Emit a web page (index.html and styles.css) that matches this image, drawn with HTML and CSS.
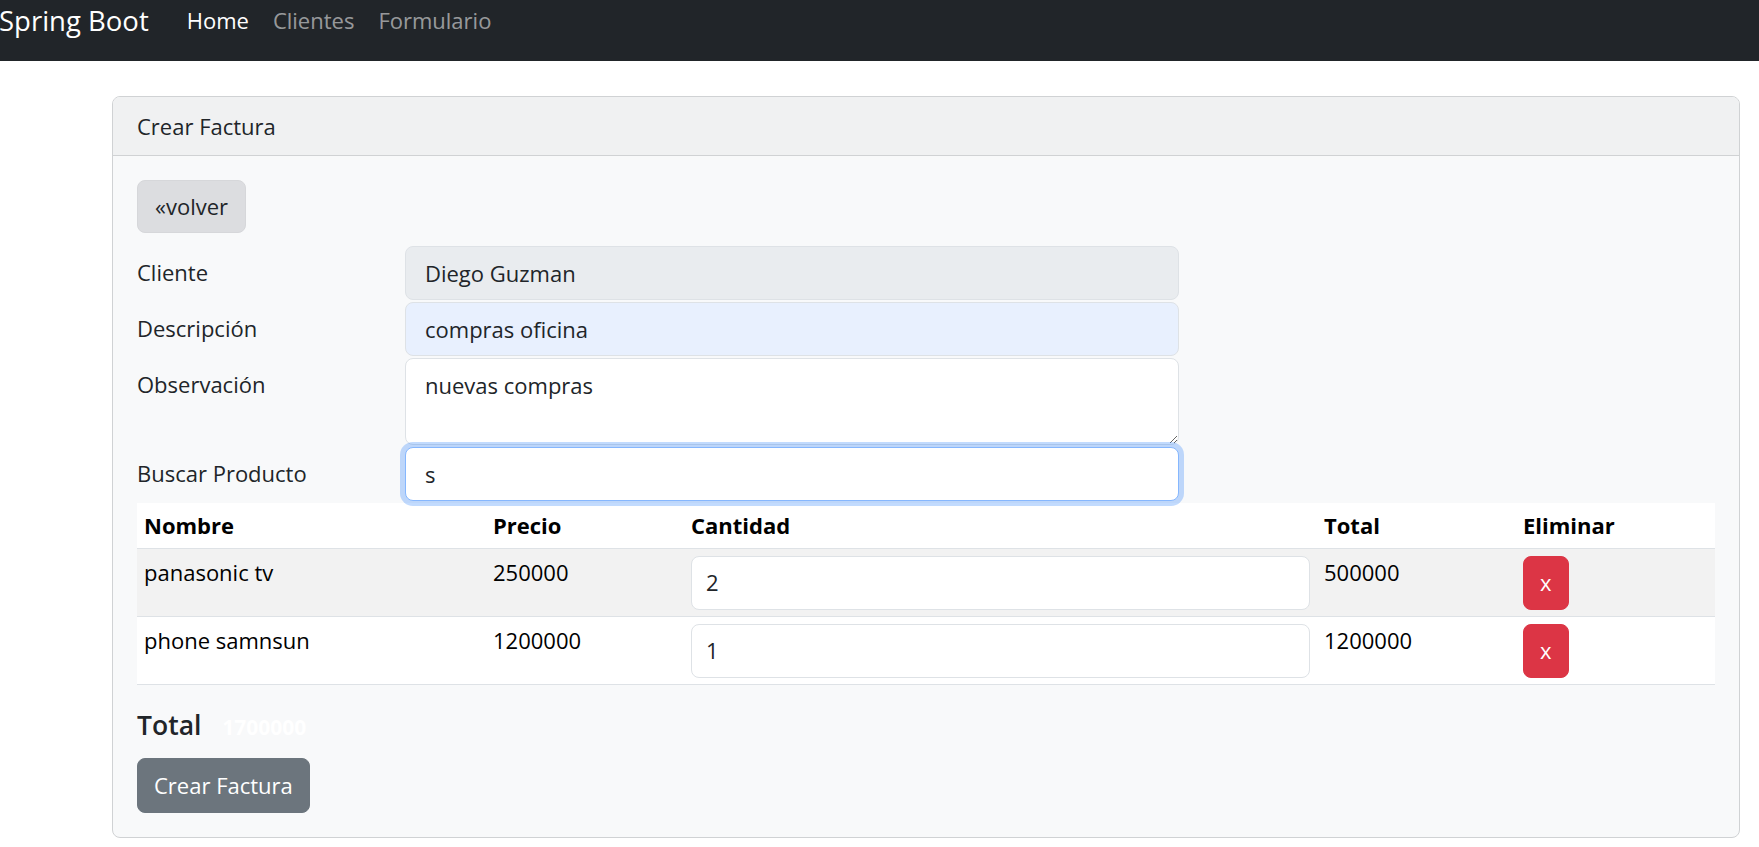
FILE: index.html
```html
<!DOCTYPE html>
<html lang="es">
<head>
<meta charset="utf-8">
<title>Crear Factura</title>
<link rel="stylesheet" href="styles.css">
</head>
<body>
<nav class="navbar">
  <a class="brand" href="#">Spring Boot</a>
  <ul class="nav">
    <li><a class="nav-link active" href="#">Home</a></li>
    <li><a class="nav-link" href="#">Clientes</a></li>
    <li><a class="nav-link" href="#">Formulario</a></li>
  </ul>
</nav>
<main class="page">
  <section class="card">
    <div class="card-header">Crear Factura</div>
    <div class="card-body">
      <div class="back-row"><a class="btn btn-back" href="#">«volver</a></div>
      <form class="form">
        <div class="form-row">
          <label class="form-label">Cliente</label>
          <input class="form-control is-readonly" type="text" value="Diego Guzman" readonly>
        </div>
        <div class="form-row">
          <label class="form-label">Descripción</label>
          <input class="form-control is-autofill" type="text" value="compras oficina">
        </div>
        <div class="form-row">
          <label class="form-label">Observación</label>
          <textarea class="form-control textarea" rows="2">nuevas compras</textarea>
        </div>
        <div class="form-row">
          <label class="form-label">Buscar Producto</label>
          <input class="form-control is-focused" type="text" value="s">
        </div>
      </form>
      <table class="table">
        <colgroup>
          <col class="c-nombre"><col class="c-precio"><col class="c-cant"><col class="c-total"><col class="c-del">
        </colgroup>
        <thead>
          <tr><th>Nombre</th><th>Precio</th><th>Cantidad</th><th>Total</th><th>Eliminar</th></tr>
        </thead>
        <tbody>
          <tr class="striped">
            <td>panasonic tv</td><td>250000</td>
            <td><input class="form-control qty" type="number" value="2"></td>
            <td>500000</td>
            <td><button class="btn btn-danger" type="button">x</button></td>
          </tr>
          <tr>
            <td>phone samnsun</td><td>1200000</td>
            <td><input class="form-control qty" type="number" value="1"></td>
            <td>1200000</td>
            <td><button class="btn btn-danger" type="button">x</button></td>
          </tr>
        </tbody>
      </table>
      <h4 class="total">Total <span class="badge">1700000</span></h4>
      <button class="btn btn-secondary" type="button">Crear Factura</button>
    </div>
  </section>
</main>
</body>
</html>
```

FILE: styles.css
```css
* { box-sizing: border-box; }

body {
  margin: 0;
  font-family: "Open Sans", "Noto Sans", sans-serif;
  font-size: 22px;
  line-height: 33px;
  color: #212529;
  background: #ffffff;
}

.navbar {
  display: flex;
  align-items: flex-start;
  height: 61px;
  background: #212529;
}

.brand {
  font-size: 27.5px;
  line-height: 41px;
  color: #ffffff;
  text-decoration: none;
  margin-left: -1px;
  margin-right: 26px;
}

.nav {
  display: flex;
  list-style: none;
  margin: 0;
  padding: 0;
}

.nav-link {
  display: block;
  padding: 4px 12px 0;
  color: rgba(255, 255, 255, 0.55);
  text-decoration: none;
}

.nav-link.active { color: #ffffff; }

.page {
  padding: 35px 19px 11px 112px;
}

.card {
  border: 1px solid #d0d2d4;
  border-radius: 8px;
  background: #f8f9fa;
  overflow: hidden;
}

.card-header {
  padding: 13px 24px 12px;
  background: #f0f1f2;
  border-bottom: 1px solid #d0d2d4;
}

.card-body {
  padding: 24px;
}

.back-row { display: flex; }

.btn {
  display: inline-block;
  font-family: inherit;
  font-size: 22px;
  line-height: 33px;
  border: 1px solid transparent;
  border-radius: 8px;
  text-decoration: none;
  cursor: pointer;
}

.btn-back {
  padding: 9px 17px;
  background: #dcdde0;
  border-color: #d6d7da;
  color: #212529;
}

.form {
  display: flex;
  flex-direction: column;
  gap: 2px;
  margin-top: 13px;
}

.form-row {
  display: grid;
  grid-template-columns: 268px 774px;
}

.form-label {
  padding-top: 10px;
}

.form-control {
  display: block;
  width: 100%;
  font-family: inherit;
  font-size: 22px;
  line-height: 33px;
  padding: 9.5px 19px;
  color: #212529;
  background: #ffffff;
  border: 1px solid #dee2e6;
  border-radius: 8px;
  outline: none;
}

.is-readonly { background: #e9ecef; }
.is-autofill { background: #e8f0fe; }

.textarea {
  height: 87px;
  resize: vertical;
}

.is-focused {
  border-color: #86b7fe;
  box-shadow: 0 0 0 5px rgba(13, 110, 253, 0.25);
  position: relative;
  z-index: 1;
}

.table {
  width: 100%;
  margin-top: 2px;
  margin-bottom: 20px;
  border-collapse: collapse;
  table-layout: fixed;
  background: #ffffff;
  color: #000000;
}

.c-nombre { width: 349px; }
.c-precio { width: 198px; }
.c-cant { width: 633px; }
.c-total { width: 199px; }
.c-del { width: auto; }

.table th,
.table td {
  padding: 6.5px 7px;
  text-align: left;
  vertical-align: top;
  border-bottom: 1px solid #dee2e6;
}

.table th {
  font-weight: 700;
  padding-top: 6px;
  padding-bottom: 6px;
}

.table tr.striped td { background: #f2f2f2; }

.qty {
  -moz-appearance: textfield;
  appearance: textfield;
  padding: 9.5px 14px;
}
.qty::-webkit-inner-spin-button,
.qty::-webkit-outer-spin-button { -webkit-appearance: none; margin: 0; }

.btn-danger {
  padding: 9.5px 16px;
  background: #dc3545;
  border-color: #dc3545;
  color: #ffffff;
}

.total {
  margin: 0 0 13px;
  font-size: 26.5px;
  line-height: 40px;
  font-weight: 600;
  color: #212529;
}

.badge {
  display: inline-block;
  padding: 0 14px;
  font-size: 21px;
  line-height: 1;
  font-weight: 700;
  color: #ffffff;
  vertical-align: baseline;
}

.btn-secondary {
  padding: 10px 16px;
  background: #6c757d;
  border-color: #6c757d;
  color: #ffffff;
}
```
